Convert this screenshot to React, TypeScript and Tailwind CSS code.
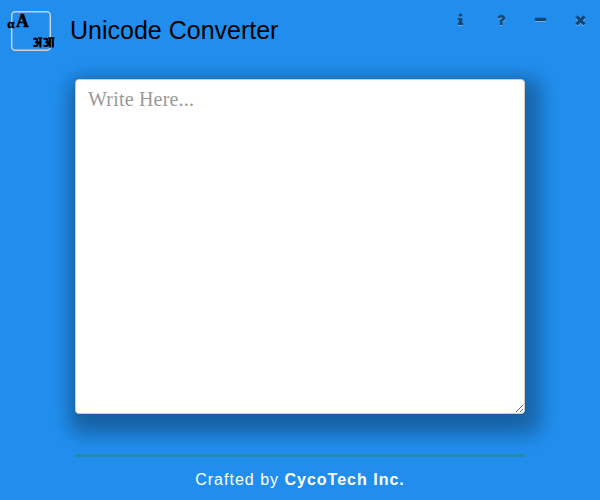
import React from "react";

type GlyphProps = { d: string; units: number; className: string };

function Glyph({ d, units, className }: GlyphProps) {
  return (
    <svg viewBox={`0 -1536 ${units} 1792`} className={`h-3.5 overflow-visible ${className}`}>
      <path d={d} transform="translate(0 128) scale(1 -1)" fill="#fff" />
      <path d={d} transform="scale(1 -1)" fill="#000" stroke="#000" strokeWidth="60" />
    </svg>
  );
}

const INFO =
  "M640 192v-128q0 -26 -19 -45t-45 -19h-512q-26 0 -45 19t-19 45v128q0 26 19 45t45 19h64v384h-64q-26 0 -45 19t-19 45v128q0 26 19 45t45 19h384q26 0 45 -19t19 -45v-576h64q26 0 45 -19t19 -45zM512 1344v-192q0 -26 -19 -45t-45 -19h-256q-26 0 -45 19t-19 45v192q0 26 19 45t45 19h256q26 0 45 -19t19 -45z";
const QUESTION =
  "M704 280v-240q0 -16 -12 -28t-28 -12h-240q-16 0 -28 12t-12 28v240q0 16 12 28t28 12h240q16 0 28 -12t12 -28zM1020 880q0 -54 -15.5 -101t-35 -76.5t-55 -59.5t-57.5 -43.5t-61 -35.5q-41 -23 -68.5 -65t-27.5 -67q0 -17 -12 -32.5t-28 -15.5h-240q-15 0 -25.5 18.5t-10.5 37.5v45q0 83 65 156.5t143 108.5q59 27 84 56t25 76q0 42 -46.5 74t-107.5 32q-65 0 -108 -29q-35 -25 -107 -115q-13 -16 -31 -16q-12 0 -25 8l-164 125q-13 10 -15.5 25t5.5 28q160 266 464 266q80 0 161 -31t146 -83t106 -127.5t41 -158.5z";
const MINUS =
  "M1408 800v-192q0 -40 -28 -68t-68 -28h-1216q-40 0 -68 28t-28 68v192q0 40 28 68t68 28h1216q40 0 68 -28t28 -68z";
const TIMES =
  "M1298 214q0 -40 -28 -68l-136 -136q-28 -28 -68 -28t-68 28l-294 294l-294 -294q-28 -28 -68 -28t-68 28l-136 136q-28 28 -28 68t28 68l294 294l-294 294q-28 28 -28 68t28 68l136 136q28 28 68 28t68 -28l294 -294l294 294q28 28 68 28t68 -28l136 -136q28 -28 28 -68t-28 -68l-294 -294l294 -294q28 -28 28 -68z";

function Logo() {
  return (
    <svg viewBox="0 0 50 42" className="mt-[10px] ml-[6px] h-[42px] w-[50px] shrink-0 overflow-visible">
      <rect x="5.7" y="1.7" width="38.6" height="38.6" rx="3.5" fill="none" stroke="#c3d3e4" strokeWidth="1.5" />
      <g stroke="#000" strokeWidth="0.5" fontFamily="Liberation Serif, serif" fontWeight="bold">
        <text x="1.3" y="17.7" fontSize="13">α</text>
        <text x="10" y="17.4" fontSize="18" textLength="12.8" lengthAdjust="spacingAndGlyphs">A</text>
      </g>
      <g fill="none" stroke="#000" strokeWidth="2.1">
        <path d="M32 28.1H36.4M42 28.1H48.6" strokeWidth="1.5" />
        <path d="M27.4 29q3.9-1 3.9 1.4q0 1.7-2.2 1.7q2.8 0 2.8 2q0 2.6-4.6 1.6M31 32.6H34M34.4 28V37.4" />
        <path d="M37.6 29q3.9-1 3.9 1.4q0 1.7-2.2 1.7q2.8 0 2.8 2q0 2.6-4.6 1.6M41 32.6H44M43.9 28V37.4M46.8 28V37.4" />
      </g>
    </svg>
  );
}

export default function App() {
  return (
    <div className="flex h-[500px] w-[600px] flex-col overflow-hidden bg-[#218eee] font-['Liberation_Sans',sans-serif]">
      <header className="flex h-[79px] items-start">
        <Logo />
        <h1 className="mt-3 ml-[14px] text-[25px] leading-9 text-black">Unicode Converter</h1>
        <nav className="mt-[13px] ml-auto flex">
          <button aria-label="Info" className="flex w-10 justify-center opacity-50"><Glyph d={INFO} units={640} className="w-[5px]" /></button>
          <button aria-label="Help" className="flex w-10 justify-center pl-px opacity-50"><Glyph d={QUESTION} units={1024} className="w-2" /></button>
          <button aria-label="Minimize" className="flex w-10 justify-center opacity-50"><Glyph d={MINUS} units={1408} className="w-[11px]" /></button>
          <button aria-label="Close" className="flex w-10 justify-center opacity-50"><Glyph d={TIMES} units={1408} className="w-[11px]" /></button>
        </nav>
      </header>
      <textarea
        placeholder="Write Here..."
        className="mx-auto block h-[335px] w-[450px] shrink-0 resize rounded-[4px] border border-[#ccc] bg-white px-3 py-[5px] font-['Liberation_Serif',serif] text-[20px] leading-[1.42857] tracking-[0.2px] shadow-[0_8px_20px_2px_rgba(0,0,0,0.12),6px_10px_18px_12px_rgba(0,0,0,0.24)] outline-none placeholder:text-[#999]"
      />
      <hr className="mx-auto mt-10 w-[450px] shrink-0 border-0 border-t-[3px] border-[#238cac]" />
      <footer className="mt-[11px] text-center text-[16px] leading-[23px] tracking-[1px] text-white">
        Crafted by <b>CycoTech Inc.</b>
      </footer>
    </div>
  );
}
